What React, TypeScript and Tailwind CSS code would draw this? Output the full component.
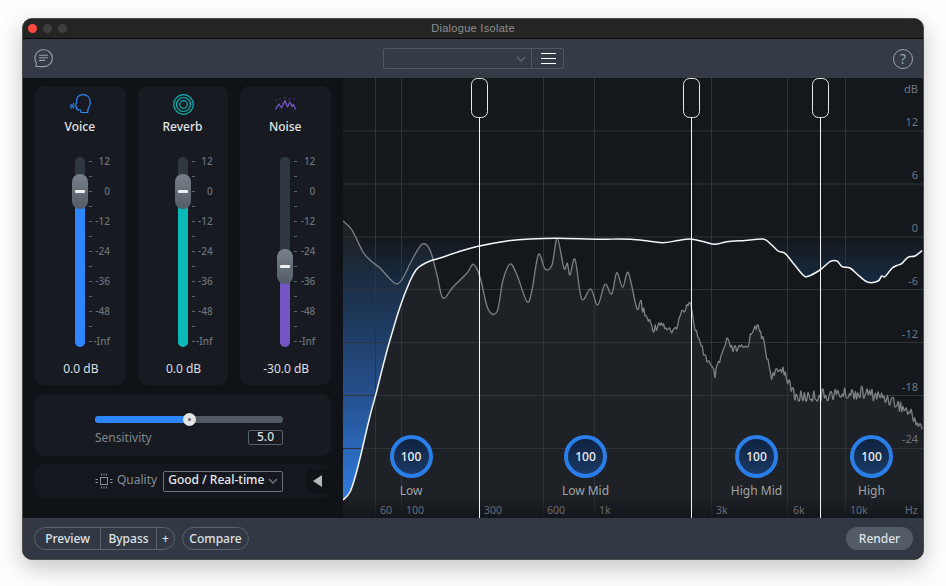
import type { ReactNode } from 'react'

type Pt = [number, number]

// spectrum control points, in page pixels
const whitePts: Pt[] = [
  [343, 500], [350, 492], [356, 474], [362, 450], [370, 416], [377, 390], [384, 362], [390, 340], [400, 307], [410, 281],
  [416, 270], [422, 265], [430, 261], [440, 258], [458, 252], [477, 246.5], [507, 241], [530, 239], [557, 238.3],
  [600, 239.3], [620, 239], [640, 240], [662, 242.7], [678, 240.5], [690, 239], [703, 241.5], [715, 244.3], [727, 241.7],
  [745, 240.5], [763, 239], [770, 243.3], [778, 251], [785, 253.3], [793, 263], [803, 275], [808, 276.3], [820, 270],
  [830, 261.7], [837, 261], [842, 266.7], [850, 268], [860, 276.7], [868, 282.3], [878, 281], [881.7, 276], [885, 276.7],
  [892, 268.3], [897, 265.5], [902, 263.3], [908, 257.3], [915, 256], [922, 250.7],
]

const greyTop: Pt[] = [
  [343, 221], [352, 230], [363, 252], [371, 261], [380, 268], [390, 279], [397, 284], [403, 278], [412, 260], [422, 244.3],
  [430, 250], [437, 275], [443, 298], [453, 287], [467, 273], [473.5, 264.3], [480, 277], [488, 309], [497, 311.7], [503, 280],
  [510, 264], [517, 275], [527, 301.7], [532, 290], [538.5, 254.3], [545, 269], [552, 265], [557.3, 238.5], [564, 268.3],
  [567.3, 263.3], [570, 275], [575, 259.3], [581.7, 299], [590.7, 289], [597.7, 305], [605, 284.3], [611.7, 294],
  [616.7, 272.7], [622.7, 287.3], [628.3, 272.7], [636.7, 308.3], [640, 302],
]

const greyNoisy: Pt[] = [
  [640, 302], [645, 315], [654, 329], [660, 322], [673, 334], [683, 310], [690.5, 300], [693, 320], [700, 345], [715, 375],
  [726.7, 341], [733, 350], [746.7, 347], [755, 324], [761.7, 335], [771.7, 376], [783, 368], [790, 386], [796, 397],
  [815, 396], [840, 394], [866, 393], [890, 399], [910, 413], [922, 428],
]

function jitter(i: number) {
  const s = Math.sin(i * 12.9898) * 43758.5453
  return s - Math.floor(s) - 0.5
}

function expandNoisy(pts: Pt[]): Pt[] {
  const out: Pt[] = []
  let n = 0
  for (let i = 0; i < pts.length - 1; i++) {
    const [x0, y0] = pts[i]
    const [x1, y1] = pts[i + 1]
    const steps = Math.max(1, Math.round((x1 - x0) / 1.2))
    for (let k = 1; k <= steps; k++) {
      const t = k / steps
      const x = x0 + (x1 - x0) * t
      const amp = x > 790 ? 12 : 8
      out.push([x, y0 + (y1 - y0) * t + jitter(n++) * amp])
    }
  }
  return out
}

function curveTo(pts: Pt[]) {
  let d = ''
  for (let i = 0; i < pts.length - 1; i++) {
    const p0 = pts[Math.max(0, i - 1)]
    const p1 = pts[i]
    const p2 = pts[i + 1]
    const p3 = pts[Math.min(pts.length - 1, i + 2)]
    const c1x = p1[0] + (p2[0] - p0[0]) / 6
    const c1y = p1[1] + (p2[1] - p0[1]) / 6
    const c2x = p2[0] - (p3[0] - p1[0]) / 6
    const c2y = p2[1] - (p3[1] - p1[1]) / 6
    d += ' C' + c1x.toFixed(1) + ' ' + c1y.toFixed(1) + ' ' + c2x.toFixed(1) + ' ' + c2y.toFixed(1) + ' ' + p2[0].toFixed(1) + ' ' + p2[1].toFixed(1)
  }
  return d
}

function smooth(pts: Pt[]) {
  return 'M' + pts[0][0] + ' ' + pts[0][1] + curveTo(pts)
}

const whitePath = smooth(whitePts)
const greyPath = smooth([...greyTop, ...expandNoisy(greyNoisy)])

const vLines = [375.5, 401.5, 543.5, 594.5, 711.5, 787.5, 845.5]
const hLines = [131, 184, 237, 289.5, 342.5, 395.5, 448.5]
const handles = [479.5, 691.5, 820.5]

const dbLabels: [string, number][] = [['dB', 89], ['12', 122], ['6', 175], ['0', 228], ['-6', 281], ['-12', 334], ['-18', 387], ['-24', 439]]
const freqLabels: [string, number][] = [['60', 37], ['100', 63], ['300', 141], ['600', 204], ['1k', 256], ['3k', 373], ['6k', 450], ['10k', 507], ['Hz', 562]]
const bands: [string, number][] = [['Low', 68], ['Low Mid', 242.5], ['High Mid', 413.5], ['High', 528.5]]

function VoiceIcon() {
  return (
    <svg width="21" height="20" viewBox="0 0 21 20" fill="none" stroke="#2e86ff" strokeWidth="1.2" strokeLinejoin="round" strokeLinecap="round">
      <path d="M7.5 3C9 1.2 11 .7 13 .7c4.5 0 7.3 3.3 7.3 7.8 0 3.5-1.8 5.5-2.5 7v3h-6.8l-.5-2.5c-1.5 0-3.5.2-4-1.5v-2l-1.5-.5 1.7-3.5c-.2-2-.2-4 .8-5.5z" />
      <path d="M3.6 9.5c-1 1.5-1 3.5 0 4.5M1.3 10.5c-.6 1-.6 2.3 0 3.5" />
    </svg>
  )
}

function ReverbIcon() {
  return (
    <svg width="21" height="21" viewBox="0 0 21 21" fill="none" stroke="#0ab8b8" strokeWidth="1.2">
      <circle cx="10.5" cy="10.5" r="9.8" />
      <circle cx="10.5" cy="10.5" r="7" />
      <circle cx="10.5" cy="10.5" r="3.8" />
    </svg>
  )
}

function NoiseIcon() {
  return (
    <svg width="21" height="20" viewBox="0 0 21 20" fill="none" stroke="#7355c4" strokeWidth="1.3" strokeLinejoin="round">
      <path d="M.5 15.5 4 10l2.5 4L10 6.5l2.500 6.500L15 8l2 4.500 1.500-2 2 5" />
      <g fill="#7355c4" stroke="none">
        <circle cx="1.5" cy="6" r=".6" />
        <circle cx="5" cy="5" r=".6" />
        <circle cx="10" cy="3.5" r=".6" />
        <circle cx="15" cy="4.5" r=".6" />
        <circle cx="19.5" cy="5" r=".6" />
        <circle cx="7" cy="9" r=".5" />
        <circle cx="13.5" cy="6" r=".5" />
      </g>
    </svg>
  )
}

function ChatIcon() {
  return (
    <svg width="19" height="19" viewBox="0 0 19 19" fill="none" stroke="#9aa2aa" strokeWidth="1.1" strokeLinecap="round">
      <path d="M10 .8a8.4 8.4 0 0 1 0 16.8c-2.5 0-5.5.2-8.3-.3.8-1 .9-2.3.5-3.8A8.4 8.4 0 0 1 10 .8z" />
      <path d="M5.5 6.2h8M5.5 8.800h8M5.500 11.400h5" />
    </svg>
  )
}

function ChipIcon() {
  return (
    <svg width="18" height="16" viewBox="0 0 18 16" fill="none" stroke="#868c94" strokeWidth="1">
      <rect x="5.5" y="4.5" width="7" height="7" />
      <path d="M6.5 .5v2M9 .5v2M11.5 .5v2M6.5 13.5v2M9 13.5v2M11.5 13.5v2M.5 6.5h2.5M.5 9.5h2.5M15 6.5h2.5M15 9.5h2.5" />
    </svg>
  )
}

function Chevron({ color }: { color: string }) {
  return (
    <svg width="10" height="6" viewBox="0 0 10 6" fill="none" stroke={color} strokeWidth="1.5">
      <path d="M1 1l4 4 4-4" />
    </svg>
  )
}

const scale = ['12', '', '0', '', '-12', '', '-24', '', '-36', '', '-48', '', '-Inf']

function Fader({ icon, name, value, fill, thumb }: { icon: ReactNode; name: string; value: string; fill: string; thumb: number }) {
  return (
    <div className="flex h-[299px] flex-1 flex-col rounded-[9px] bg-[#171b21]">
      <div className="mt-[8px] flex h-[20px] items-center justify-center">{icon}</div>
      <div className="mt-[5px] h-[16px] pr-[1px] text-center text-[12px] leading-[16px] font-medium text-[#e3e5e8]">{name}</div>
      <div className="mt-[19px] flex h-[195px] pl-[40px]">
        <div className="relative mt-[3px] h-[190px] w-[10px] rounded-full bg-[#2f3740]">
          <div className="absolute inset-x-0 bottom-0 rounded-b-full" style={{ top: thumb, backgroundColor: fill }} />
          <div
            className="absolute left-[-3px] flex h-[35px] w-[16px] items-center justify-center rounded-[8px] bg-gradient-to-b from-[#78818a] to-[#545c65]"
            style={{ top: thumb - 17 }}
          >
            <div className="h-[3px] w-[10px] rounded-[1px] bg-[#eceef0]" />
          </div>
        </div>
        <div className="ml-[4px] flex flex-col">
          {scale.map((s, i) => (
            <div key={i} className="flex h-[15px] items-center">
              <div className="h-px w-[3px] bg-[#5d646d]" />
              <div className="w-[18px] text-right text-[10px] leading-[15px] font-medium text-[#6b727b]">{s}</div>
            </div>
          ))}
        </div>
      </div>
      <div className="mt-[12px] h-[16px] pl-[1px] text-center text-[12px] leading-[16px] text-[#dcdfe3]">{value}</div>
    </div>
  )
}

function Graph() {
  return (
    <div className="relative h-[440px] w-[580px] overflow-hidden bg-[#14171b]">
      <svg width="580" height="440" viewBox="343 78 580 440" className="block">
        <defs>
          <linearGradient id="blue" gradientUnits="userSpaceOnUse" x1="0" y1="236" x2="0" y2="500">
            <stop offset="0" stopColor="#1a3454" stopOpacity="0" />
            <stop offset="0.15" stopColor="#183454" stopOpacity="0.6" />
            <stop offset="0.4" stopColor="#20406c" />
            <stop offset="0.6" stopColor="#25508c" />
            <stop offset="1" stopColor="#2f7ce0" />
          </linearGradient>
          <linearGradient id="floor" gradientUnits="userSpaceOnUse" x1="0" y1="496" x2="0" y2="518">
            <stop offset="0" stopColor="#101318" stopOpacity="0" />
            <stop offset="1" stopColor="#101318" stopOpacity="0.8" />
          </linearGradient>
        </defs>
        <path d={greyPath + ' L923 518 L343 518 Z'} fill="#1e2125" />
        <path d={'M343 236 L922 236 L922 250.7' + curveTo([...whitePts].reverse()) + ' Z'} fill="url(#blue)" />
        {hLines.map((y) => (
          <line key={y} x1="343" x2="923" y1={y} y2={y} stroke="#2e343a" />
        ))}
        {vLines.map((x) => (
          <line key={x} x1={x} x2={x} y1="78" y2="518" stroke="#2e343a" />
        ))}
        <rect x="343" y="496" width="580" height="22" fill="url(#floor)" />
        <path d={greyPath} fill="none" stroke="#7d8185" strokeWidth="1.3" strokeLinejoin="round" />
        <path d={whitePath} fill="none" stroke="#f4f5f6" strokeWidth="1.5" strokeLinejoin="round" />
        {handles.map((x) => (
          <g key={x}>
            <line x1={x} x2={x} y1="117" y2="518" stroke="#f4f5f6" />
            <rect x={x - 8} y="78.5" width="16" height="39" rx="6" fill="#14171b" stroke="#e4e6e8" />
          </g>
        ))}
      </svg>

      {dbLabels.map(([t, y]) => (
        <div key={t} className="absolute right-[5px] h-[14px] -translate-y-1/2 text-[11px] leading-[14px] text-[#6f7680]" style={{ top: y - 78 }}>
          {t}
        </div>
      ))}
      {freqLabels.map(([t, x]) => (
        <div key={t} className="absolute top-[425px] h-[14px] text-[10.5px] leading-[14px] text-[#666d76]" style={{ left: x }}>
          {t}
        </div>
      ))}
      {bands.map(([t, x]) => (
        <div key={t} className="absolute top-[357px] flex w-[80px] -translate-x-1/2 flex-col items-center" style={{ left: x }}>
          <div className="flex h-[43px] w-[43px] items-center justify-center rounded-full border-[4px] border-[#2a7ee8] bg-gradient-to-b from-[#0f2340] to-[#1b3a66] text-[12px] font-medium text-[#eef0f2]">
            100
          </div>
          <div className="mt-[4px] h-[18px] text-[12px] leading-[18px] text-[#a0a5ab]">{t}</div>
        </div>
      ))}
    </div>
  )
}

function LeftPanel() {
  return (
    <div className="flex h-[440px] w-[320px] flex-col bg-[#0f1318] px-[12px] pt-[8px]">
      <div className="flex gap-[12px]">
        <Fader icon={<VoiceIcon />} name="Voice" value="0.0 dB" fill="#2e86ff" thumb={34} />
        <Fader icon={<ReverbIcon />} name="Reverb" value="0.0 dB" fill="#0ab8b8" thumb={34} />
        <Fader icon={<NoiseIcon />} name="Noise" value="-30.0 dB" fill="#7355c4" thumb={109} />
      </div>

      <div className="mt-[9px] h-[62px] rounded-[9px] bg-[#171b21] pl-[60px] pt-[22px]">
        <div className="relative h-[7px] w-[188px] rounded-full bg-[#525b64]">
          <div className="h-[7px] w-[95px] rounded-full bg-[#2e86ff]" />
          <div className="absolute left-[88px] top-[-3px] flex h-[13px] w-[13px] items-center justify-center rounded-full bg-[#e4e5e6]">
            <div className="h-[3px] w-[3px] rounded-full bg-[#60666e]" />
          </div>
        </div>
        <div className="mt-[4px] flex w-[188px] items-center justify-between">
          <span className="pt-[2px] text-[12px] text-[#7f858d]">Sensitivity</span>
          <span className="flex h-[15px] w-[35px] items-center justify-center rounded-[2px] border border-[#59616b] text-[12px] font-medium text-[#dcdfe3]">
            5.0
          </span>
        </div>
      </div>

      <div className="mt-[8px] flex h-[34px] items-center rounded-[9px] bg-[#14181e] pl-[60px]">
        <ChipIcon />
        <span className="ml-[4px] pb-[2px] text-[12px] text-[#868c94]">Quality</span>
        <div className="ml-[6px] flex h-[21px] w-[120px] items-center justify-between rounded-[2px] border border-[#68707a] px-[4px]">
          <span className="pb-[2px] text-[12px] font-medium whitespace-nowrap text-[#e6e8ea]">Good / Real-time</span>
          <Chevron color="#68707a" />
        </div>
        <div className="mb-[5px] ml-auto flex h-[24px] w-[24px] items-center justify-center self-end rounded-l-[3px] bg-[#0f1318] pr-[3px]">
          <div className="h-0 w-0 border-y-[6px] border-r-[9px] border-y-transparent border-r-[#b4b8bd]" />
        </div>
      </div>
    </div>
  )
}

const pill = 'flex items-center justify-center text-[12px] font-medium text-[#dfe2e6]'

export default function App() {
  return (
    <div className="h-[586px] w-[946px] overflow-hidden bg-[#fdfdfd] pl-[22px] pt-[18px] font-['Noto_Sans',sans-serif]">
      <div className="h-[542px] w-[902px] overflow-hidden rounded-[10px] border border-[#4c4c4c] bg-[#0f1318] shadow-[0_8px_22px_rgba(0,0,0,0.22)]">
        {/* title bar */}
        <div className="relative flex h-[20px] items-center justify-center border-b border-[#0a0a0a] bg-[#242424]">
          <div className="absolute left-[5px] flex gap-[6px]">
            <div className="h-[9px] w-[9px] rounded-full bg-[#fb4b3f]" />
            <div className="h-[9px] w-[9px] rounded-full bg-[#3e3e3e]" />
            <div className="h-[9px] w-[9px] rounded-full bg-[#3e3e3e]" />
          </div>
          <span className="font-['Liberation_Sans',sans-serif] text-[11px] tracking-[0.3px] text-[#8f8f8f]">Dialogue Isolate</span>
        </div>

        {/* toolbar */}
        <div className="grid h-[39px] grid-cols-[1fr_auto_1fr] items-center bg-[#343b46] pl-[11px] pr-[10px]">
          <ChatIcon />
          <div className="flex h-[21px] w-[181px] rounded-[2px] border border-[#4e5863]">
            <div className="flex flex-1 items-center justify-end border-r border-[#4e5863] pr-[5px]">
              <Chevron color="#596370" />
            </div>
            <div className="flex w-[31px] flex-col items-center justify-center gap-[4px] pl-[1px]">
              <div className="h-px w-[15px] bg-white" />
              <div className="h-px w-[15px] bg-white" />
              <div className="h-px w-[15px] bg-white" />
            </div>
          </div>
          <div className="flex h-[20px] w-[20px] items-center justify-center justify-self-end rounded-full border border-[#9aa2aa] text-[14px] text-[#9aa2aa]">
            ?
          </div>
        </div>

        <div className="flex">
          <LeftPanel />
          <Graph />
        </div>

        {/* footer */}
        <div className="flex h-[41px] items-center bg-[#323944] pl-[11px] pr-[10px]">
          <div className="flex h-[23px] w-[141px] rounded-full border border-[#5a636e]">
            <div className={pill + ' w-[66px] border-r border-[#5a636e]'}>Preview</div>
            <div className={pill + ' w-[56px] border-r border-[#5a636e]'}>Bypass</div>
            <div className={pill + ' flex-1'}>+</div>
          </div>
          <div className={pill + ' ml-[7px] h-[23px] w-[67px] rounded-full border border-[#5a636e]'}>Compare</div>
          <div className={pill + ' ml-auto h-[23px] w-[67px] rounded-full bg-[#525b66]'}>Render</div>
        </div>
      </div>
    </div>
  )
}
